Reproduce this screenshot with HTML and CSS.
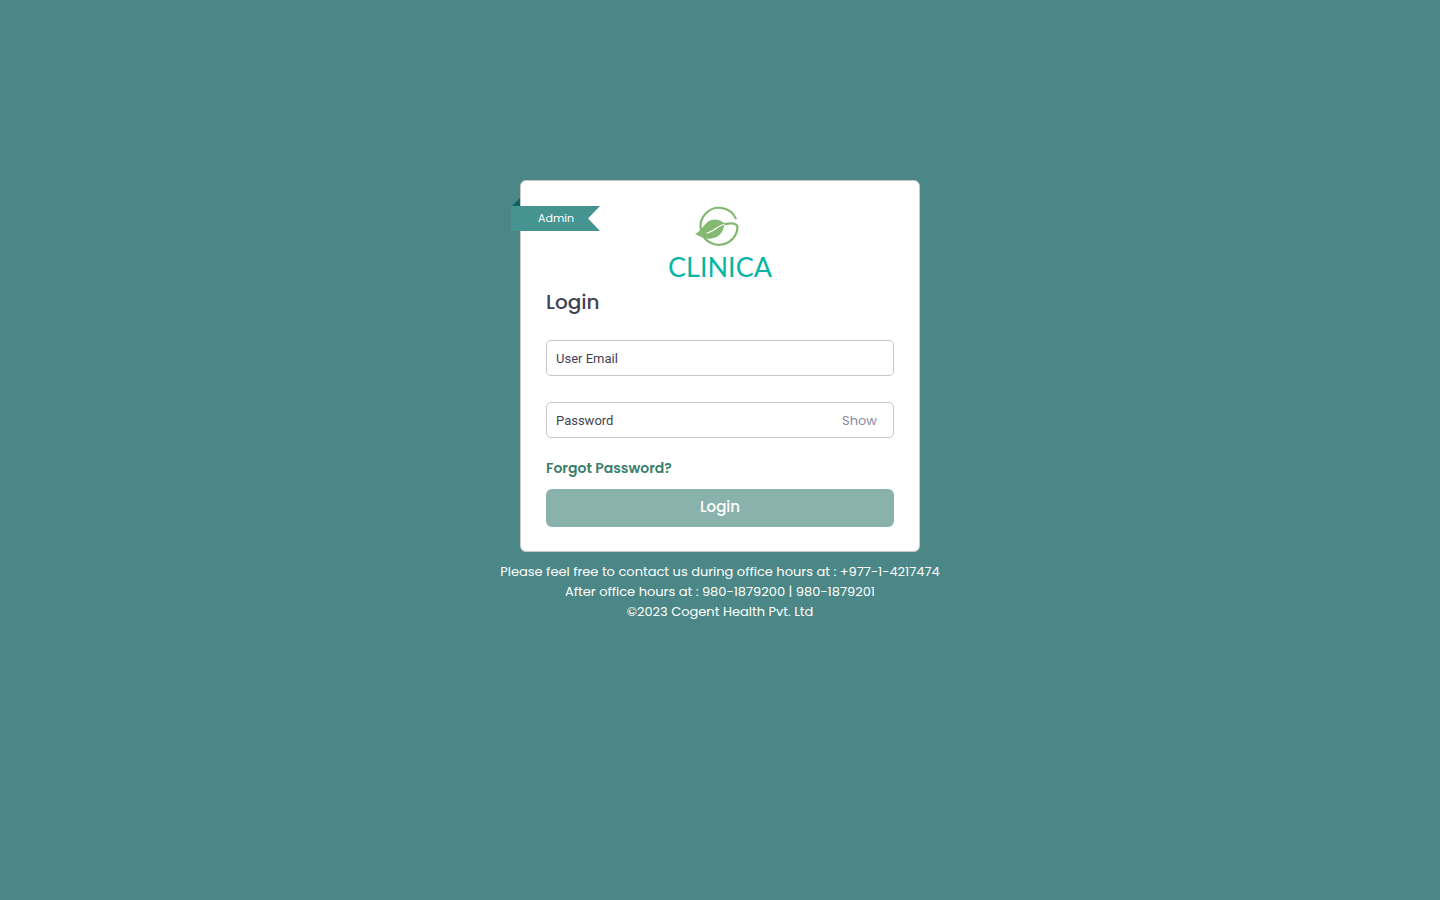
FILE: index.html
```html
<!DOCTYPE html>
<html lang="en">
<head>
<meta charset="utf-8">
<meta name="viewport" content="width=device-width, initial-scale=1">
<title>Clinica Login</title>
<link rel="stylesheet" href="styles.css">
</head>
<body>
<main class="page">
  <section class="card">
    <div class="ribbon">
      <svg class="ribbon-shape" viewBox="0 0 90 33" aria-hidden="true">
        <path d="M1 8L9 0V8Z" fill="#0e6462"/>
        <path d="M0 8H89L77 20.5L89 33H0Z" fill="#469492"/>
      </svg>
      <span class="ribbon-text">Admin</span>
    </div>
    <svg class="logo" viewBox="0 0 120 82" role="img" aria-label="Clinica">
      <g fill="none" stroke="#84b971" stroke-width="2.2">
        <path d="M76 14A18.500 18.500 0 1 0 77.500 22C76.500 17 67 18 61 20.500"/>
      </g>
      <path d="M35 29C40.500 26.500 42 22 47 17.500C51.500 13.500 59 13 64.500 18.500C63.500 28 58 33 51.500 33.500C45 34.500 41 31.500 35 29Z" fill="#84b971"/>
      <path d="M46.500 28C54 27 57 20.500 64.500 19.500" fill="none" stroke="#fff" stroke-width="1.200"/>
      <text class="logo-name" x="60" y="72" text-anchor="middle">CLINICA</text>
    </svg>
    <h1 class="title">Login</h1>
    <form class="form">
      <div class="field">
        <input class="input" id="email" type="email" autocomplete="username">
        <label class="label" for="email">User Email</label>
      </div>
      <div class="field">
        <input class="input" id="password" type="password" autocomplete="current-password">
        <label class="label" for="password">Password</label>
        <button class="show" type="button">Show</button>
      </div>
      <a class="forgot" href="#">Forgot Password?</a>
      <button class="submit" type="submit">Login</button>
    </form>
  </section>
  <footer class="footer">
    <p>Please feel free to contact us during office hours at : +977-1-4217474</p>
    <p>After office hours at : 980-1879200 | 980-1879201</p>
    <p>©2023 Cogent Health Pvt. Ltd</p>
  </footer>
</main>
</body>
</html>
```
FILE: styles.css
```css
* { box-sizing: border-box; }

body {
  margin: 0;
  background: #4b8786;
  color: #3f4254;
  font-family: Poppins, Inter, sans-serif;
  font-size: 13px;
}

.page {
  min-height: 100vh;
  padding: 180px 16px 16px;
  display: flex;
  flex-direction: column;
  align-items: center;
}

.card {
  position: relative;
  width: 100%;
  max-width: 400px;
  padding: 24px 25px;
  background: #fff;
  border: 1px solid #c8c8c8;
  border-radius: 6px;
}

.ribbon {
  position: absolute;
  left: -10px;
  top: 17px;
  width: 90px;
  height: 33px;
}

.ribbon-shape { display: block; width: 100%; height: 100%; }

.ribbon-text {
  position: absolute;
  inset: 8px 0 0;
  color: #fff;
  font-size: 11px;
  line-height: 25px;
  text-align: center;
}

.logo {
  display: block;
  width: 120px;
  height: 82px;
  margin: 0 auto;
}

.logo-name { font: 27px Lato, sans-serif; fill: #06b5a4; }

.title {
  margin: 0 0 23px;
  font-size: 20px;
  line-height: 30px;
  font-weight: 500;
}

.form { display: flex; flex-direction: column; }

.field {
  display: grid;
  align-items: center;
  margin-bottom: 26px;
  font-family: Roboto, sans-serif;
}

.field > * { grid-area: 1 / 1; }

.input {
  width: 100%;
  height: 36px;
  padding: 0 9px;
  border: 1px solid #c8c8c8;
  border-radius: 5px;
  background: #fff;
  color: #3f4254;
  font: inherit;
}

.label { justify-self: start; padding-left: 10px; }

.show {
  justify-self: end;
  margin-right: 17px;
  padding: 2px 0 0;
  border: 0;
  background: none;
  color: #868aa2;
  font: 13px Poppins, Inter, sans-serif;
}

.forgot {
  align-self: flex-start;
  margin: -7px 0 10px;
  color: #3a7f6d;
  font-size: 14px;
  font-weight: 600;
  line-height: 22px;
  text-decoration: none;
}

.submit {
  height: 38px;
  padding: 0 0 3px;
  border: 0;
  border-radius: 6px;
  background: #8ab2ad;
  color: #fff;
  font: 500 15px Poppins, Inter, sans-serif;
}

.footer {
  padding-top: 10px;
  color: #fff;
  line-height: 20px;
  text-align: center;
}

.footer p { margin: 0; }
```
